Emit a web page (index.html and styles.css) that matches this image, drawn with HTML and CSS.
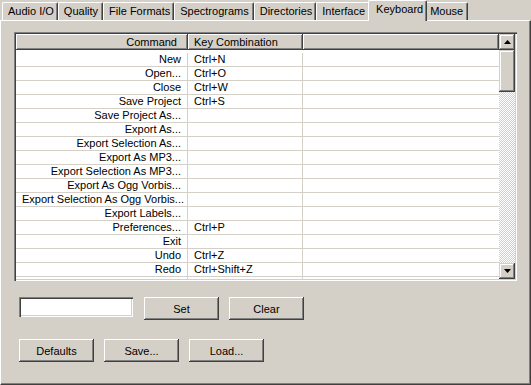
FILE: index.html
```html
<!doctype html>
<html lang="en">
<head>
    <meta charset="UTF-8">
    <title>Preferences - Keyboard</title>
    <link rel="stylesheet" href="styles.css">
</head>
<body>
    <div class="tabs">
        <div class="tab">Audio I/O</div>
        <div class="tab">Quality</div>
        <div class="tab">File Formats</div>
        <div class="tab">Spectrograms</div>
        <div class="tab">Directories</div>
        <div class="tab">Interface</div>
        <div class="tab tab--active">Keyboard</div>
        <div class="tab">Mouse</div>
    </div>
    <div class="panel">
        <div class="listbox">
            <div class="list">
                <div class="list__head">
                    <div class="head__cell head__cell--right">Command</div>
                    <div class="head__cell">Key Combination</div>
                    <div class="head__cell"></div>
                </div>
                <div class="list__rows">
                    <div class="row"><span>New</span><span>Ctrl+N</span><span></span></div>
                    <div class="row"><span>Open...</span><span>Ctrl+O</span><span></span></div>
                    <div class="row"><span>Close</span><span>Ctrl+W</span><span></span></div>
                    <div class="row"><span>Save Project</span><span>Ctrl+S</span><span></span></div>
                    <div class="row"><span>Save Project As...</span><span></span><span></span></div>
                    <div class="row"><span>Export As...</span><span></span><span></span></div>
                    <div class="row"><span>Export Selection As...</span><span></span><span></span></div>
                    <div class="row"><span>Export As MP3...</span><span></span><span></span></div>
                    <div class="row"><span>Export Selection As MP3...</span><span></span><span></span></div>
                    <div class="row"><span>Export As Ogg Vorbis...</span><span></span><span></span></div>
                    <div class="row"><span>Export Selection As Ogg Vorbis...</span><span></span><span></span></div>
                    <div class="row"><span>Export Labels...</span><span></span><span></span></div>
                    <div class="row"><span>Preferences...</span><span>Ctrl+P</span><span></span></div>
                    <div class="row"><span>Exit</span><span></span><span></span></div>
                    <div class="row"><span>Undo</span><span>Ctrl+Z</span><span></span></div>
                    <div class="row"><span>Redo</span><span>Ctrl+Shift+Z</span><span></span></div>
                    <div class="row"><span></span><span></span><span></span></div>
                </div>
            </div>
            <div class="scrollbar">
                <div class="scrollbar__btn">
                    <svg width="7" height="4" viewBox="0 0 7 4"><polygon points="3.5,0 7,4 0,4" fill="#000"/></svg>
                </div>
                <div class="scrollbar__thumb"></div>
                <div class="scrollbar__track"></div>
                <div class="scrollbar__btn">
                    <svg width="7" height="4" viewBox="0 0 7 4"><polygon points="0,0 7,0 3.5,4" fill="#000"/></svg>
                </div>
            </div>
        </div>
        <div class="controls">
            <div class="controls__row">
                <input type="text" class="field">
                <button class="btn">Set</button>
                <button class="btn">Clear</button>
            </div>
            <div class="controls__row controls__row--second">
                <button class="btn">Defaults</button>
                <button class="btn">Save...</button>
                <button class="btn">Load...</button>
            </div>
        </div>
    </div>
</body>
</html>
```

FILE: styles.css
```css
*, ::before, ::after {
    padding: 0;
    margin: 0;
    box-sizing: border-box;
}
body {
    width: 531px;
    height: 385px;
    overflow: hidden;
    background: #D4D0C8;
    color: #000000;
    font-family: 'Liberation Sans', Arial, sans-serif;
    font-size: 11px;
}
.tabs {
    display: flex;
    align-items: flex-end;
    height: 20px;
    padding-left: 2px;
}
.tab {
    height: 18px;
    padding: 0 4px 0 5px;
    line-height: 16px;
    white-space: nowrap;
    background: #D4D0C8;
    border-top: 1px solid #ffffff;
    border-left: 1px solid #ffffff;
    border-right: 1px solid #404040;
    border-radius: 2px 2px 0 0;
    box-shadow: inset -1px 0 #808080;
}
.tab:nth-child(odd) {
    padding-right: 3px;
}
.tab--active {
    position: relative;
    z-index: 1;
    height: 21px;
    margin: 0 -2px -1px;
    padding: 0 6px 0 7px;
    line-height: 17px;
}
.tab--active + .tab {
    border-left: none;
}
.panel {
    height: 365px;
    padding: 11px 12px 0 13px;
    border: 1px solid;
    border-color: #ffffff #404040 #404040 #ffffff;
    box-shadow: inset -1px -1px #808080;
}
.listbox {
    display: flex;
    width: 503px;
    height: 249px;
    padding: 2px;
    background: #ffffff;
    box-shadow: inset 1px 1px #808080, inset 2px 2px #404040, inset -1px -1px #ffffff, inset -2px -2px #D4D0C8;
}
.list {
    flex: 1;
    overflow: hidden;
}
.list__head, .row {
    display: grid;
    grid-template-columns: 172px 115px 1fr;
}
.list__head {
    height: 16px;
    background: #D4D0C8;
}
.head__cell {
    padding: 0 6px;
    line-height: 16px;
    white-space: nowrap;
    box-shadow: inset -1px -1px #404040, inset 1px 1px #ffffff, inset -2px -2px #808080;
}
.head__cell--right {
    text-align: right;
    padding-right: 11px;
}
.list__rows {
    padding-top: 3px;
}
.row {
    height: 14px;
}
.row span {
    height: 14px;
    padding: 0 6px;
    line-height: 13px;
    white-space: nowrap;
    border-right: 1px solid #D4D0C8;
    border-bottom: 1px solid #D4D0C8;
}
.row span:first-child {
    text-align: right;
}
.row span:last-child {
    border-right: none;
}
.scrollbar {
    display: flex;
    flex-direction: column;
    width: 16px;
}
.scrollbar__btn, .scrollbar__thumb {
    background: #D4D0C8;
    box-shadow: inset -1px -1px #404040, inset 1px 1px #D4D0C8, inset -2px -2px #808080, inset 2px 2px #ffffff;
}
.scrollbar__btn {
    display: flex;
    align-items: center;
    justify-content: center;
    height: 16px;
}
.scrollbar__btn svg {
    display: block;
}
.scrollbar__thumb {
    height: 42px;
}
.scrollbar__track {
    flex: 1;
    background: repeating-conic-gradient(#ffffff 0 25%, #D4D0C8 0 50%) 0 0 / 2px 2px;
}
.controls {
    padding: 16px 0 0 5px;
}
.controls__row {
    display: flex;
    align-items: flex-start;
    gap: 10px;
}
.controls__row--second {
    margin-top: 19px;
}
.field {
    width: 114px;
    height: 20px;
    margin-right: 1px;
    border: none;
    outline: none;
    background: #ffffff;
    box-shadow: inset 1px 1px #808080, inset 2px 2px #404040, inset -1px -1px #ffffff, inset -2px -2px #D4D0C8;
}
.btn {
    width: 75px;
    height: 23px;
    border: none;
    outline: none;
    background: #D4D0C8;
    color: #000000;
    font-family: inherit;
    font-size: 11px;
    box-shadow: inset -1px -1px #404040, inset 1px 1px #ffffff, inset -2px -2px #808080, inset 2px 2px #D4D0C8;
}
```
